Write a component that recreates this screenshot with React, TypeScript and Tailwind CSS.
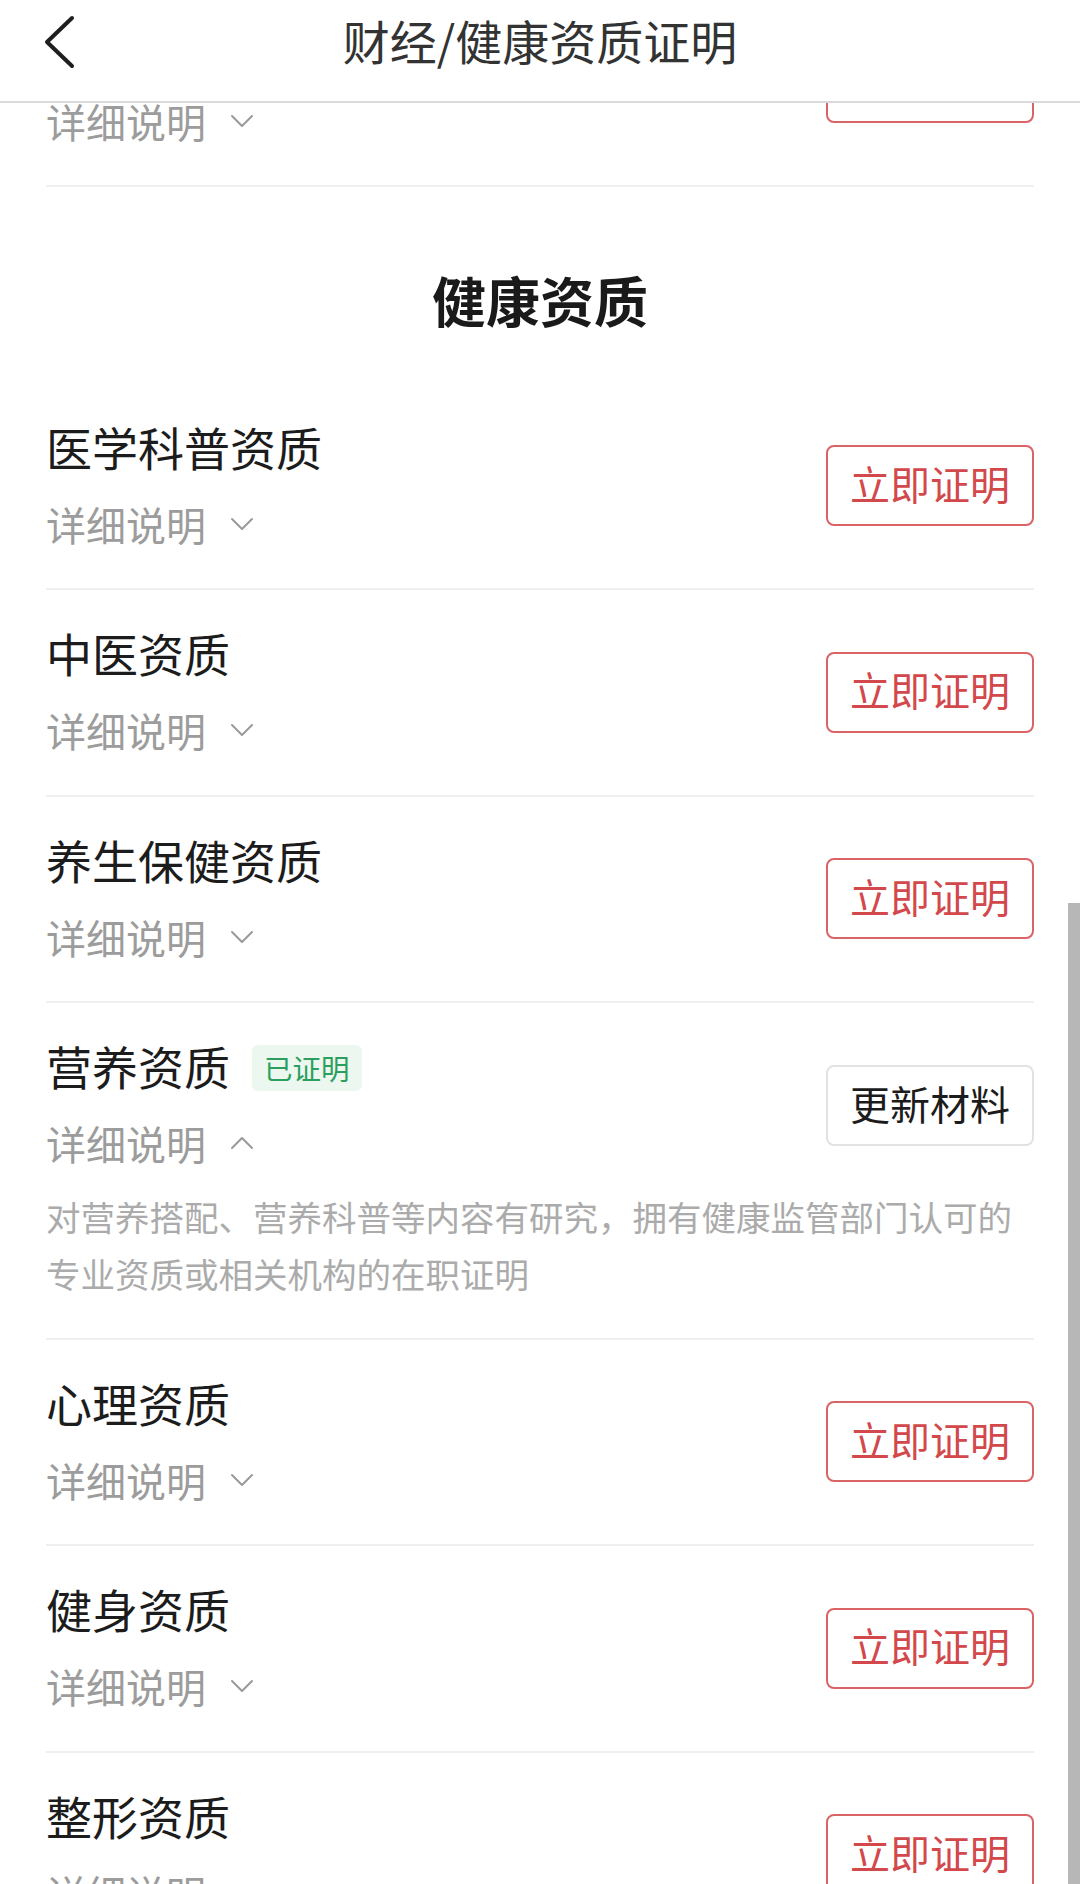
import React from "react";

type Item = {
  name: string;
  verified?: boolean;
  open?: boolean;
  desc?: string;
};

const items: Item[] = [
  { name: "医学科普资质" },
  { name: "中医资质" },
  { name: "养生保健资质" },
  {
    name: "营养资质",
    verified: true,
    open: true,
    desc: "对营养搭配、营养科普等内容有研究，拥有健康监管部门认可的专业资质或相关机构的在职证明",
  },
  { name: "心理资质" },
  { name: "健身资质" },
  { name: "整形资质" },
];

const Chevron: React.FC<{ up?: boolean }> = ({ up }) => (
  <svg width="24" height="14" viewBox="0 0 24 14" className="ml-[24px]" fill="none">
    <polyline
      points={up ? "2,12 12,2 22,12" : "2,2 12,12 22,2"}
      stroke="#9a9a9a"
      strokeWidth="2"
      strokeLinecap="round"
      strokeLinejoin="round"
    />
  </svg>
);

const Row: React.FC<{ item: Item }> = ({ item }) => (
  <div
    className={`border-b-2 border-[#efefef] ${item.open ? "h-[336.5px]" : "h-[206.5px]"}`}
  >
    <div className="flex justify-between items-start">
      <div className="pt-[35px]">
        <div className="flex items-center h-[60px]">
          <span className="text-[46px] leading-[60px] text-[#1c1c1c] -mt-[6px]">{item.name}</span>
          {item.verified && (
            <span className="ml-[22px] h-[46px] px-[12px] flex items-center rounded-[6px] bg-[#ebf7ef] text-[28.5px] text-[#2c9f5e]">
              已证明
            </span>
          )}
        </div>
        <div className="mt-[17px] h-[56px] flex items-center">
          <span className="text-[40px] leading-[56px] text-[#9c9c9c]">详细说明</span>
          <Chevron up={item.open} />
        </div>
      </div>
      {item.verified ? (
        <button className="mt-[61.5px] w-[208px] h-[81px] pb-[4px] rounded-[8px] border-2 border-[#e2e2e2] text-[40px] text-[#1c1c1c] flex items-center justify-center">
          更新材料
        </button>
      ) : (
        <button className="mt-[61.5px] w-[208px] h-[81px] pb-[6px] rounded-[8px] border-2 border-[#d96466] text-[40px] text-[#d2484b] flex items-center justify-center">
          立即证明
        </button>
      )}
    </div>
    {item.open && item.desc && (
      <p className="mt-[17px] text-[34.5px] leading-[57px] text-[#ababab]">{item.desc}</p>
    )}
  </div>
);

export default function App() {
  return (
    <div
      className="relative w-[1080px] h-[1884px] overflow-hidden bg-white"
      style={{ fontFamily: '"Noto Sans CJK SC", "Noto Sans", sans-serif' }}
    >
      {/* 顶部导航 */}
      <div className="absolute top-0 left-0 right-0 h-[103px] bg-white border-b-2 border-[#dadada] z-10 flex items-center justify-center">
        <svg
          className="absolute left-[42px] top-[14px]"
          width="36"
          height="58"
          viewBox="0 0 36 58"
          fill="none"
        >
          <polyline
            points="30,4 5,28 30,52"
            stroke="#1f1f1f"
            strokeWidth="4"
            strokeLinecap="round"
            strokeLinejoin="round"
          />
        </svg>
        <span className="text-[47px] leading-none text-[#333333] -mt-[22px]">财经/健康资质证明</span>
      </div>

      <div className="px-[46px] -mt-[19.5px]">
        {/* 上一组最后一项（被导航遮住） */}
        <Row item={{ name: "财经资质" }} />

        <div className="h-[196.5px] pt-[78px] text-center">
          <span className="text-[54px] leading-[70px] font-bold text-[#1a1a1a]">健康资质</span>
        </div>

        {items.map((it) => (
          <Row key={it.name} item={it} />
        ))}
      </div>

      {/* 滚动条 */}
      <div className="absolute right-0 top-[903px] w-[12px] h-[981px] bg-[#b7b7b7]" />
    </div>
  );
}
